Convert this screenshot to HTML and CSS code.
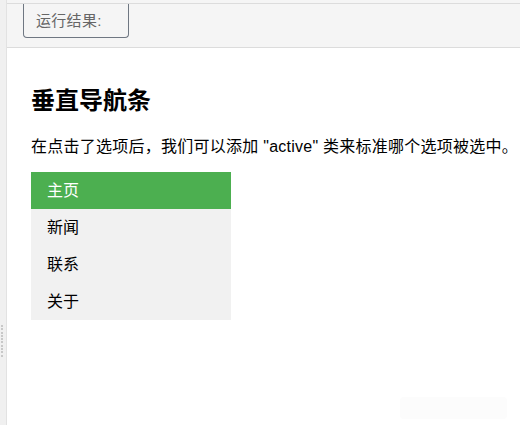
FILE: index.html
```html
<!DOCTYPE html>
<html lang="zh">
<head>
<meta charset="utf-8">
<link rel="stylesheet" href="styles.css">
</head>
<body>
<div class="gutter">
  <div class="grip"><i></i><i></i><i></i><i></i><i></i><i></i><i></i><i></i><i></i><i></i></div>
</div>
<div class="main">
  <div class="topbar">
    <div class="topbar-inner">
      <div class="result-btn">运行结果:</div>
    </div>
  </div>
  <div class="content">
    <h2 class="title">垂直导航条</h2>
    <p class="desc">在点击了选项后，我们可以添加 "active" 类来标准哪个选项被选中。</p>
    <ul class="nav">
      <li class="nav-item active">主页</li>
      <li class="nav-item">新闻</li>
      <li class="nav-item">联系</li>
      <li class="nav-item">关于</li>
    </ul>
  </div>
  <div class="ghost"></div>
</div>
</body>
</html>
```
FILE: styles.css
```css
html, body {
  margin: 0;
  padding: 0;
  height: 100%;
  background: #ffffff;
}
body {
  display: flex;
  font-family: "Liberation Sans", "Noto Sans CJK SC", sans-serif;
  color: #000;
  position: relative;
  overflow: hidden;
}
.gutter {
  width: 6px;
  flex: none;
  background: #f0f0f0;
  border-right: 1px solid #e2e2e2;
  display: flex;
  flex-direction: column;
  padding-top: 325px;
}
.grip {
  display: flex;
  flex-direction: column;
  gap: 1.3px;
  padding-left: 1px;
}
.grip i {
  display: block;
  width: 2px;
  height: 2px;
  background: #c8c8c8;
}
.main {
  flex: 1;
  display: flex;
  flex-direction: column;
}
.topbar {
  background: #f5f5f5;
  padding-top: 3px;
}
.topbar-inner {
  border-top: 1px solid #dcdcdc;
  border-bottom: 1px solid #dcdcdc;
  height: 43px;
}
.result-btn {
  margin-left: 16px;
  width: 106px;
  height: 34px;
  border: 1px solid #6f7782;
  border-top: none;
  border-radius: 0 0 4px 4px;
  box-sizing: border-box;
  font-size: 15px;
  line-height: 15px;
  color: #666;
  display: flex;
  align-items: center;
  padding-left: 12px;
  letter-spacing: 0.3px;
}
.content {
  padding-left: 24px;
}
.title {
  margin: 37px 0 0 0;
  font-size: 24px;
  line-height: 32px;
  font-weight: bold;
}
.desc {
  margin: 19px 0 0 0;
  font-size: 16px;
  line-height: 22px;
  white-space: nowrap;
  letter-spacing: 0.25px;
}
.nav {
  list-style: none;
  margin: 14px 0 0 0;
  padding: 0;
  width: 200px;
  background: #f1f1f1;
}
.nav-item {
  padding: 8px 16px;
  font-size: 16px;
  line-height: 21px;
  color: #000;
}
.nav-item.active {
  background: #4caf50;
  color: #fff;
}
.ghost {
  position: absolute;
  left: 400px;
  top: 397px;
  width: 107px;
  height: 22px;
  background: #fcfcfc;
  border-radius: 4px;
}
```
